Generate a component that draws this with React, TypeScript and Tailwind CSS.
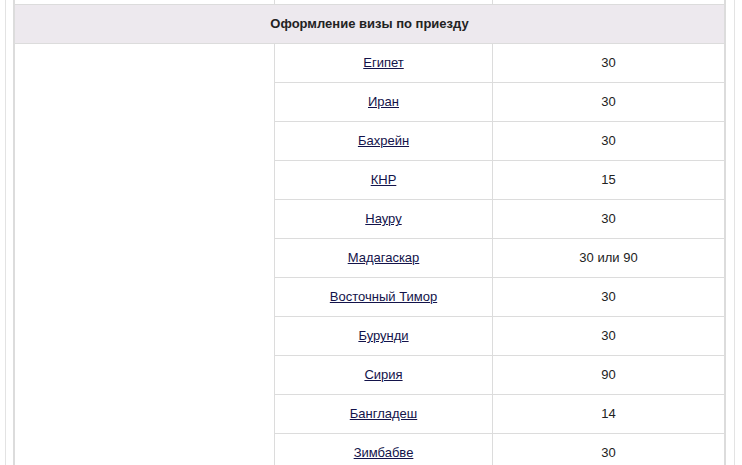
import React from "react";

const rows: [string, string][] = [
  ["Египет", "30"],
  ["Иран", "30"],
  ["Бахрейн", "30"],
  ["КНР", "15"],
  ["Науру", "30"],
  ["Мадагаскар", "30 или 90"],
  ["Восточный Тимор", "30"],
  ["Бурунди", "30"],
  ["Сирия", "90"],
  ["Бангладеш", "14"],
  ["Зимбабве", "30"],
];

export default function App() {
  return (
    <div
      className="h-[465px] overflow-hidden bg-white text-[13px] text-[#222]"
      style={{ fontFamily: '"Liberation Sans", Arial, sans-serif' }}
    >
      <div className="ml-[5px] w-[730px] h-full border-x border-[#e3e3e3] pl-[7px] pr-[8px]">
        <div className="h-full border-x-2 border-[#dcdcdc]">
          <div className="flex h-[4px]">
            <div className="w-[260px] border-r border-[#dcdcdc]" />
            <div className="w-[218px] border-r border-[#dcdcdc]" />
            <div className="flex-1" />
          </div>
          <div className="h-[40px] border-y border-[#dcdcdc] bg-[#ede9ee] flex items-center justify-center font-bold">
            Оформление визы по приезду
          </div>
          <div className="flex">
            <div className="w-[260px] border-r border-[#dcdcdc]" />
            <div className="flex-1">
              {rows.map(([c, d]) => (
                <div key={c} className="flex h-[39px] border-b border-[#dcdcdc]">
                  <div className="w-[218px] border-r border-[#dcdcdc] flex items-center justify-center">
                    <a href="#" className="underline text-[#13134a]">
                      {c}
                    </a>
                  </div>
                  <div className="flex-1 flex items-center justify-center">{d}</div>
                </div>
              ))}
            </div>
          </div>
        </div>
      </div>
    </div>
  );
}
